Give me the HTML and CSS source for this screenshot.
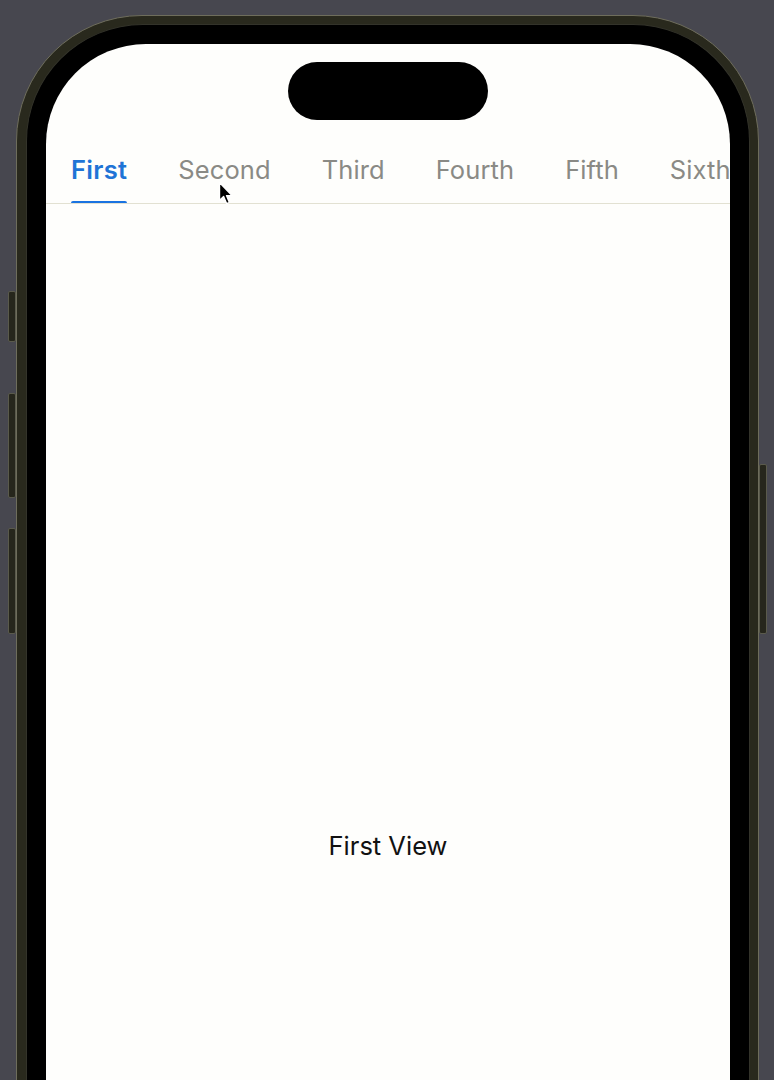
FILE: index.html
```html
<!DOCTYPE html>
<html>
<head>
<meta charset="utf-8">
<link rel="stylesheet" href="styles.css">
</head>
<body>
<div class="stage">
  <div class="phone">
    <span class="btn btn-action"></span>
    <span class="btn btn-vol-up"></span>
    <span class="btn btn-vol-down"></span>
    <span class="btn btn-power"></span>
    <div class="bezel">
      <div class="screen">
        <div class="island"></div>
        <nav class="tabs">
          <span class="tab active">First</span>
          <span class="tab">Second</span>
          <span class="tab">Third</span>
          <span class="tab">Fourth</span>
          <span class="tab">Fifth</span>
          <span class="tab">Sixth</span>
        </nav>
        <main class="content">
          <p class="view-label">First View</p>
        </main>
      </div>
    </div>
  </div>
  <svg class="cursor" width="16" height="26" viewBox="0 0 16 26">
    <path d="M1.5 1.5 L1.5 19.5 L5.6 15.6 L8.6 22.6 L11.4 21.4 L8.5 14.6 L14 14.6 Z" fill="#000" stroke="#fff" stroke-width="1.4" stroke-linejoin="round"/>
  </svg>
</div>
</body>
</html>
```

FILE: styles.css
```css
html, body {
  margin: 0;
  padding: 0;
}

body {
  background: #47474f;
  width: 774px;
  height: 1080px;
  overflow: hidden;
  font-family: Inter, "Liberation Sans", Arial, sans-serif;
}

.stage {
  position: relative;
  width: 774px;
  height: 1080px;
  overflow: hidden;
}

.phone {
  position: relative;
  margin: 15px 0 0 16px;
  width: 743px;
  box-sizing: border-box;
  border: 1px solid #6e6d5c;
  border-radius: 126px;
  background: #29291d;
  padding: 8px 8px 0 9px;
}

.btn {
  position: absolute;
  width: 8px;
  background: #26261c;
  border: 1px solid #5a5a4c;
  box-sizing: border-box;
  border-radius: 2px;
}

.btn-action { left: -9px; top: 275px; height: 51px; }
.btn-vol-up { left: -9px; top: 377px; height: 105px; }
.btn-vol-down { left: -9px; top: 512px; height: 106px; }
.btn-power { right: -9px; top: 448px; height: 170px; }

.bezel {
  background: #000;
  border-radius: 117px;
  padding: 19px 19px 0 19px;
  border: 1px solid #33332a;
  border-bottom: none;
}

.screen {
  background: #fefefc;
  border-radius: 100px 100px 0 0;
  height: 1540px;
  overflow: hidden;
  display: flex;
  flex-direction: column;
}

.island {
  align-self: center;
  width: 200px;
  height: 58px;
  margin-top: 18px;
  background: #000;
  border-radius: 29px;
  flex: none;
}

.tabs {
  display: flex;
  gap: 51px;
  padding: 35px 0 0 25px;
  white-space: nowrap;
  border-bottom: 1px solid #e2e1d2;
  height: 84px;
  box-sizing: border-box;
  flex: none;
  overflow: hidden;
}

.tab {
  position: relative;
  font-size: 25.5px;
  line-height: 30px;
  height: 48px;
  color: #8a8a85;
  letter-spacing: 0.1px;
  flex: none;
}

.tab.active {
  color: #1f74d6;
  font-weight: 600;
  letter-spacing: 0.3px;
}

.tab.active::after {
  content: "";
  position: absolute;
  left: 0;
  right: 0;
  top: 46px;
  height: 4px;
  border-radius: 2px;
  background: #1a73e1;
}

.content {
  height: 1282px;
  display: flex;
  align-items: center;
  justify-content: center;
  flex: none;
}

.view-label {
  margin: 0;
  font-size: 25.5px;
  color: #111;
}

.cursor {
  position: absolute;
  left: 218px;
  top: 181px;
}
```
